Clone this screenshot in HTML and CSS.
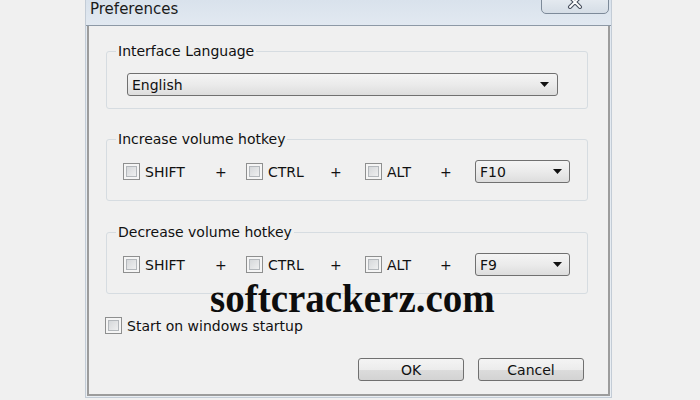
FILE: index.html
```html
<!DOCTYPE html>
<html lang="en">
<head>
  <meta charset="UTF-8" />
  <title>Preferences</title>
  <link rel="stylesheet" href="styles.css">
</head>
<body>

  <!-- Dialog window -->
  <div class="window">
    <div class="titlebar">
      <span class="title">Preferences</span>
      <button class="close-btn">
        <svg width="20" height="14" viewBox="0 0 20 14">
          <path d="M5 2 L15 12 M15 2 L5 12" stroke="#4a5260" stroke-width="4" stroke-linecap="round" fill="none"/>
          <path d="M5 2 L15 12 M15 2 L5 12" stroke="#ffffff" stroke-width="1.8" stroke-linecap="round" fill="none"/>
        </svg>
      </button>
    </div>

    <div class="client">
      <fieldset class="group">
        <legend>Interface Language</legend>
        <div class="group-body lang-body">
          <div class="select select-wide">
            <span>English</span>
            <svg class="arrow" width="9" height="5" viewBox="0 0 9 5"><path d="M0 0 H9 L4.5 5 Z" fill="#111"/></svg>
          </div>
        </div>
      </fieldset>

      <fieldset class="group increase">
        <legend>Increase volume hotkey</legend>
        <div class="group-body hotkey">
          <label class="key"><span class="check"></span>SHIFT</label>
          <span class="plus">+</span>
          <label class="key"><span class="check"></span>CTRL</label>
          <span class="plus">+</span>
          <label class="key"><span class="check"></span>ALT</label>
          <span class="plus">+</span>
          <div class="select select-key">
            <span>F10</span>
            <svg class="arrow" width="9" height="5" viewBox="0 0 9 5"><path d="M0 0 H9 L4.5 5 Z" fill="#111"/></svg>
          </div>
        </div>
      </fieldset>

      <fieldset class="group decrease">
        <legend>Decrease volume hotkey</legend>
        <div class="group-body hotkey">
          <label class="key"><span class="check"></span>SHIFT</label>
          <span class="plus">+</span>
          <label class="key"><span class="check"></span>CTRL</label>
          <span class="plus">+</span>
          <label class="key"><span class="check"></span>ALT</label>
          <span class="plus">+</span>
          <div class="select select-key">
            <span>F9</span>
            <svg class="arrow" width="9" height="5" viewBox="0 0 9 5"><path d="M0 0 H9 L4.5 5 Z" fill="#111"/></svg>
          </div>
        </div>
      </fieldset>

      <label class="key startup"><span class="check"></span>Start on windows startup</label>

      <div class="buttons">
        <button class="btn">OK</button>
        <button class="btn">Cancel</button>
      </div>
    </div>

    <div class="watermark">softcrackerz.com</div>
  </div>

</body>
</html>
```

FILE: styles.css
```css
body {
  margin: 0;
  background: #f0f0f0;
  font-family: "DejaVu Sans", sans-serif;
  font-size: 14px;
  color: #111111;
}

.window {
  position: relative;
  width: 525px;
  margin-left: 85px;
  border: 1px solid #c3ccd6;
  border-top: none;
  background: linear-gradient(#d9e2ec, #e2e9f1 26px, #e9eef3);
}

.titlebar {
  display: flex;
  justify-content: space-between;
  align-items: flex-start;
  height: 25px;
  padding-left: 4px;
  border-bottom: 1px solid #8d99a6;
}

.title {
  font-size: 15px;
  line-height: 18px;
  color: #1a1a1a;
}

.close-btn {
  width: 68px;
  height: 24px;
  margin: -10px 2px 0 0;
  padding: 0;
  border: 1px solid #7d8a99;
  border-radius: 0 0 5px 5px;
  background: linear-gradient(#eef2f6, #d5dde6);
  display: flex;
  align-items: center;
  justify-content: center;
}

.client {
  margin: 0 1px 1px;
  padding: 17px 0 13px;
  border: 2px solid #9c9c9c;
  border-top: none;
  background: #f0f0f0;
}

.group {
  margin: 0 20px 0 17px;
  padding: 0;
  border: 1px solid #d6dce1;
  border-radius: 3px;
}

.increase {
  margin-top: 22px;
}

.decrease {
  margin-top: 23px;
}

.group legend {
  margin-left: 9px;
  padding: 0 2px;
  line-height: 17px;
}

.lang-body {
  padding: 13px 0 12px 20px;
}

.hotkey {
  display: grid;
  grid-template-columns: 83px 40px 75px 44px 66px 44px 95px;
  align-items: center;
  padding: 12px 0 17px 16px;
}

.plus {
  padding-left: 9px;
}

.key {
  display: flex;
  align-items: center;
  gap: 5px;
}

.check {
  width: 17px;
  height: 17px;
  box-sizing: border-box;
  border: 1px solid #8e8f8f;
  background: linear-gradient(135deg, #cdd0d3, #f7f7f7);
  box-shadow: inset 0 0 0 2px #f5f5f5, inset 0 0 0 3px #b3b7bb;
}

.select {
  height: 23px;
  box-sizing: border-box;
  border: 1px solid #707070;
  border-radius: 3px;
  background: linear-gradient(#f4f4f4, #ebebeb 50%, #dddddd);
  display: flex;
  align-items: center;
  justify-content: space-between;
  padding: 0 8px 0 4px;
}

.select-wide {
  width: 431px;
}

.select-key {
  width: 95px;
  padding-right: 7px;
}

.startup {
  width: max-content;
  margin: 23px 0 0 16px;
}

.buttons {
  display: flex;
  justify-content: flex-end;
  gap: 14px;
  margin-top: 24px;
  padding-right: 24px;
}

.btn {
  width: 106px;
  height: 23px;
  border: 1px solid #707070;
  border-radius: 3px;
  background: linear-gradient(#f4f4f4, #ececec 50%, #dcdcdc 51%, #d3d3d3);
  font-family: inherit;
  font-size: 14px;
  color: #111111;
}

.watermark {
  position: absolute;
  left: 124px;
  top: 282px;
  font-family: "Liberation Serif", serif;
  font-weight: bold;
  font-size: 39px;
  line-height: 34px;
  color: #0d0d0d;
}
```
